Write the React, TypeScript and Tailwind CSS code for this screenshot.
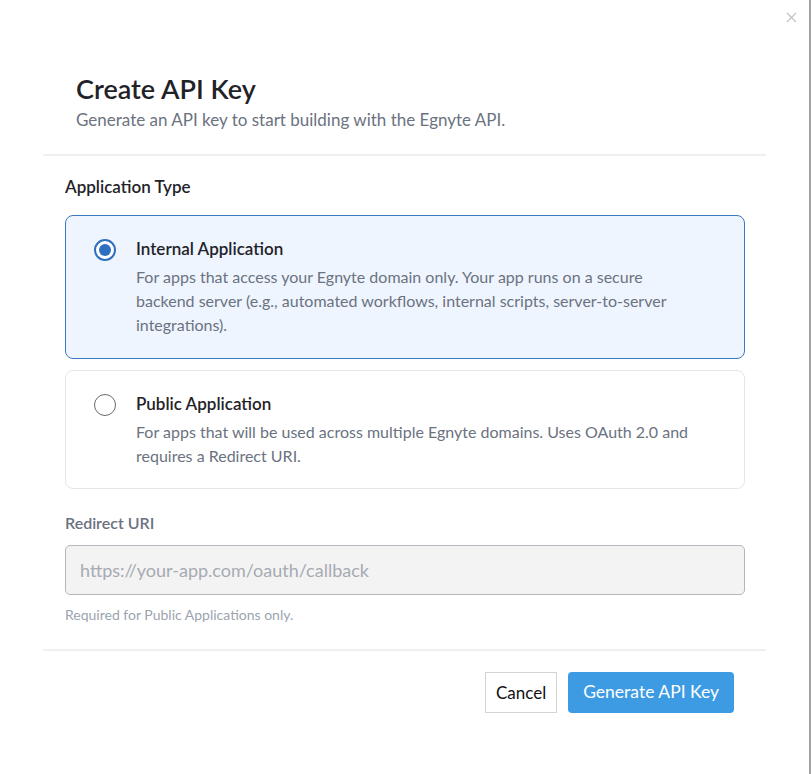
import React from "react";

const font = { fontFamily: "Lato, 'Noto Sans', sans-serif" };

function Radio({ checked }: { checked: boolean }) {
  return checked ? (
    <div className="w-[22px] h-[22px] rounded-full border-2 border-[#2f6fbf] flex items-center justify-center bg-white shrink-0">
      <div className="w-[12px] h-[12px] rounded-full bg-[#2f6fbf]" />
    </div>
  ) : (
    <div className="w-[22px] h-[22px] rounded-full border-[1.5px] border-[#6b6b6b] bg-white shrink-0" />
  );
}

function Option({
  checked,
  title,
  desc,
}: {
  checked: boolean;
  title: string;
  desc: string;
}) {
  return (
    <div
      className={
        checked
          ? "flex gap-[20px] rounded-[8px] border border-[#3a78c2] bg-[#eef5ff] pl-[28px] pr-[50px] pt-[21px] pb-[21px]"
          : "flex gap-[20px] rounded-[8px] border border-[#e4e6ea] bg-white pl-[28px] pr-[50px] pt-[21px] pb-[20px]"
      }
    >
      <div className="pt-[2px]">
        <Radio checked={checked} />
      </div>
      <div className="flex flex-col">
        <div className="text-[17px] leading-[24px] font-semibold text-[#1f2328]">{title}</div>
        <div className="text-[16px] leading-[24px] text-[#6b7280] mt-[4px]">{desc}</div>
      </div>
    </div>
  );
}

export default function App() {
  return (
    <div
      className="relative w-[811px] h-[774px] bg-white border-r-[2px] border-[#a3a3a3] flex flex-col"
      style={font}
    >
      <button className="absolute top-[9px] right-[10px] w-[16px] h-[16px] flex items-center justify-center text-[#c4c4c4]">
        <svg width="11" height="11" viewBox="0 0 11 11" fill="none" stroke="currentColor" strokeWidth="1.3">
          <path d="M1 1 L10 10 M10 1 L1 10" />
        </svg>
      </button>

      <div className="pt-[72px] pl-[76px] pb-[22px]">
        <h1 className="text-[27px] leading-[34px] font-semibold text-[#1f2328]">Create API Key</h1>
        <p className="text-[17px] leading-[24px] text-[#6b7280] mt-[2px]">
          Generate an API key to start building with the Egnyte API.
        </p>
      </div>

      <div className="mx-[43px] h-[2px] bg-[#eef0f2]" />

      <div className="pl-[65px] pr-[64px] pt-[19px] flex flex-col">
        <div className="text-[17px] leading-[24px] font-semibold text-[#1f2328]">Application Type</div>
        <div className="mt-[16px] flex flex-col gap-[11px]">
          <Option
            checked
            title="Internal Application"
            desc="For apps that access your Egnyte domain only. Your app runs on a secure backend server (e.g., automated workflows, internal scripts, server-to-server integrations)."
          />
          <Option
            checked={false}
            title="Public Application"
            desc="For apps that will be used across multiple Egnyte domains. Uses OAuth 2.0 and requires a Redirect URI."
          />
        </div>

        <div className="mt-[22px] text-[16px] leading-[24px] font-semibold text-[#6b7280]">Redirect URI</div>
        <input
          disabled
          placeholder="https://your-app.com/oauth/callback"
          className="mt-[10px] h-[50px] w-full rounded-[5px] border border-[#b3b7bd] bg-[#f3f3f4] px-[14px] text-[18px] placeholder:text-[#a6abb2]"
          style={font}
        />
        <div className="mt-[10px] text-[14px] leading-[20px] text-[#9ca3af]">Required for Public Applications only.</div>
      </div>

      <div className="mt-[24px] mx-[43px] h-[2px] bg-[#eef0f2]" />

      <div className="flex justify-end gap-[11px] pr-[75px] pt-[21px]">
        <button className="h-[41px] px-[10px] border border-[#d4d4d4] bg-white text-[17px] text-[#111]" style={font}>
          Cancel
        </button>
        <button className="h-[41px] px-[15px] rounded-[4px] bg-[#3c9be3] text-[17.5px] text-white" style={font}>
          Generate API Key
        </button>
      </div>
    </div>
  );
}
